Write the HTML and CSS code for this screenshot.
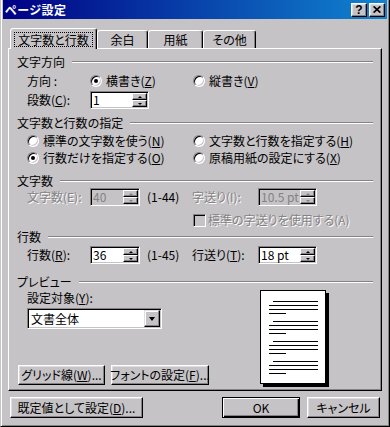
FILE: index.html
```html
<!DOCTYPE html>
<html lang="ja">
<head>
    <meta charset="UTF-8">
    <meta name="viewport" content="width=device-width, initial-scale=1.0">
    <title>ページ設定</title>
    <link rel="stylesheet" href="styles.css">
</head>
<body>
    <div class="window">
        <div class="titlebar">
            <span class="title">ページ設定</span>
            <span class="cap-btn">?</span>
            <span class="cap-btn">
                <svg width="8" height="7" viewBox="0 0 8 7"><path d="M0.6 0.4L7.4 6.6M7.4 0.4L0.6 6.6" stroke="#000" stroke-width="1.7"/></svg>
            </span>
        </div>

        <div class="client">
            <div class="tabs">
                <div class="tab tab-1 active"><span class="focus">文字数と行数</span></div>
                <div class="tab tab-2">余白</div>
                <div class="tab tab-3">用紙</div>
                <div class="tab tab-4">その他</div>
            </div>

            <div class="panel">
                <!-- 文字方向 -->
                <div class="group-head"><span>文字方向</span><i class="etch"></i></div>
                <div class="row r-dir">
                    <span class="lbl">方向 :</span>
                    <label class="opt opt-dir"><span class="radio on"></span>横書き(<u>Z</u>)</label>
                    <label class="opt"><span class="radio"></span>縦書き(<u>V</u>)</label>
                </div>
                <div class="row tall r-cols">
                    <span class="lbl">段数(<u>C</u>):</span>
                    <div class="spin spin-wide">
                        <span class="spin-val">1</span>
                        <span class="spin-btns"><span class="up"></span><span class="dn"></span></span>
                    </div>
                </div>

                <!-- 文字数と行数の指定 -->
                <div class="group-head h-spec"><span>文字数と行数の指定</span><i class="etch"></i></div>
                <div class="row r-spec1">
                    <label class="opt opt-spec"><span class="radio"></span>標準の文字数を使う(<u>N</u>)</label>
                    <label class="opt"><span class="radio"></span>文字数と行数を指定する(<u>H</u>)</label>
                </div>
                <div class="row r-spec2">
                    <label class="opt opt-spec"><span class="radio on"></span>行数だけを指定する(<u>O</u>)</label>
                    <label class="opt"><span class="radio"></span>原稿用紙の設定にする(<u>X</u>)</label>
                </div>

                <!-- 文字数 -->
                <div class="group-head h-chars"><span>文字数</span><i class="etch"></i></div>
                <div class="row tall">
                    <span class="lbl dis">文字数(E):</span>
                    <div class="spin spin-narrow disabled">
                        <span class="spin-val">40</span>
                        <span class="spin-btns"><span class="up"></span><span class="dn"></span></span>
                    </div>
                    <span class="range">(1-44)</span>
                    <span class="lbl2 dis">字送り(I):</span>
                    <div class="spin spin-wide disabled">
                        <span class="spin-val">10.5 pt</span>
                        <span class="spin-btns"><span class="up"></span><span class="dn"></span></span>
                    </div>
                </div>
                <div class="row r-check">
                    <label class="opt dis"><span class="check"></span>標準の字送りを使用する(A)</label>
                </div>

                <!-- 行数 -->
                <div class="group-head h-lines"><span>行数</span><i class="etch"></i></div>
                <div class="row tall r-lines">
                    <span class="lbl">行数(<u>R</u>):</span>
                    <div class="spin spin-narrow">
                        <span class="spin-val">36</span>
                        <span class="spin-btns"><span class="up"></span><span class="dn"></span></span>
                    </div>
                    <span class="range">(1-45)</span>
                    <span class="lbl2">行送り(<u>T</u>):</span>
                    <div class="spin spin-wide">
                        <span class="spin-val">18 pt</span>
                        <span class="spin-btns"><span class="up"></span><span class="dn"></span></span>
                    </div>
                </div>

                <!-- プレビュー -->
                <div class="group-head h-prev"><span>プレビュー</span><i class="etch"></i></div>
                <div class="preview">
                    <div class="preview-side">
                        <span class="target-lbl">設定対象(<u>Y</u>):</span>
                        <div class="select">
                            <span class="select-val">文書全体</span>
                            <span class="select-btn"></span>
                        </div>
                        <div class="preview-btns">
                            <span class="btn btn-grid">グリッド線(<u>W</u>)...</span>
                            <span class="btn btn-font">フォントの設定(<u>F</u>)...</span>
                        </div>
                    </div>
                    <svg class="page" width="69" height="97" viewBox="0 0 69 97">
                        <rect x="3" y="3" width="66" height="94" fill="#000"/>
                        <rect x="0.5" y="0.5" width="65" height="93" fill="#fff" stroke="#000"/>
                        <path stroke="#000" d="M13 11.5H58M9 15.5H58M9 19.5H58M9 23.5H26
                                               M13 31.5H58M9 35.5H58M9 39.5H58M9 43.5H26
                                               M13 51.5H58M9 55.5H58M9 59.5H58M9 63.5H26
                                               M13 71.5H58M9 75.5H58M9 79.5H58M9 83.5H26"/>
                    </svg>
                </div>
            </div>

            <div class="footer">
                <span class="btn btn-default-set">既定値として設定(<u>D</u>)...</span>
                <span class="btn btn-ok default">OK</span>
                <span class="btn btn-cancel">キャンセル</span>
            </div>
        </div>
    </div>
</body>
</html>
```

FILE: styles.css
```css
:root {
    --face: #c6c3c6;
    --shadow: #848284;
    --light: #dedede;
    --dark: #000;
}

* {
    box-sizing: border-box;
}

body {
    margin: 0;
    background: var(--face);
    font-family: "Noto Sans CJK JP", sans-serif;
    font-size: 12px;
    line-height: 16px;
    font-feature-settings: "palt";
    color: #000;
}

u {
    text-decoration: underline;
    text-underline-offset: 1px;
}

label {
    cursor: default;
}

.window {
    width: 390px;
    height: 427px;
    display: flex;
    flex-direction: column;
    background: var(--face);
    border: 1px solid;
    border-color: var(--face) var(--dark) var(--dark) var(--face);
    border-top: 0;
    padding: 0 2px 2px;
    box-shadow: inset 1px 0 #fff, inset -1px -1px var(--shadow);
}

/* title bar */
.titlebar {
    height: 19px;
    flex: none;
    display: flex;
    align-items: center;
    padding: 0 2px;
    background: linear-gradient(to right, #000084, #1084d0);
    color: #fff;
}

.title {
    flex: 1;
    font-weight: bold;
    letter-spacing: 0.5px;
}

.cap-btn {
    width: 16px;
    height: 14px;
    display: flex;
    align-items: center;
    justify-content: center;
    background: var(--face);
    border: 1px solid;
    border-color: #fff var(--dark) var(--dark) #fff;
    box-shadow: inset -1px -1px var(--shadow), inset 1px 1px var(--light);
    color: #000;
    font: bold 12px/12px "Liberation Sans", sans-serif;
}

.cap-btn + .cap-btn {
    margin-left: 2px;
}

/* client area */
.client {
    flex: 1;
    padding: 9px 5px 0;
}

.tabs {
    height: 20px;
    display: flex;
    align-items: flex-end;
    padding-left: 2px;
}

.tab {
    height: 18px;
    display: flex;
    align-items: center;
    justify-content: center;
    border: 1px solid;
    border-bottom: 0;
    border-color: #fff var(--dark) transparent #fff;
    border-radius: 3px 3px 0 0;
    box-shadow: inset -1px 0 var(--shadow);
}

.tab.active {
    height: 21px;
    margin-bottom: -1px;
    position: relative;
    z-index: 1;
    background: var(--face);
}

.tab-1 { width: 87px; }
.tab-2 { width: 51px; }
.tab-3 { width: 55px; }
.tab-4 { width: 53px; }

.focus {
    width: 79px;
    border: 1px dotted #000;
    text-align: center;
    line-height: 13px;
}

.panel {
    height: 343px;
    border: 1px solid;
    border-color: #fff var(--dark) var(--dark) #fff;
    box-shadow: inset -1px -1px var(--shadow);
    padding-top: 6px;
}

.group-head {
    height: 14px;
    display: flex;
    align-items: center;
    padding: 0 8px;
    line-height: 14px;
}

.etch {
    flex: 1;
    height: 2px;
    margin-left: 7px;
    border-top: 1px solid var(--shadow);
    border-bottom: 1px solid #fff;
}

.row {
    height: 16px;
    display: flex;
    align-items: center;
    padding-left: 18px;
    white-space: nowrap;
}

.row.tall {
    height: 18px;
}

.r-dir { margin-top: 4px; }
.r-cols { margin-top: 2px; }
.h-spec { margin-top: 7px; }
.r-spec1 { margin-top: 3px; }
.r-spec2 { margin-top: 1px; }
.h-chars { margin-top: 8px; }
.r-check { margin-top: 6px; padding-left: 184px; }
.h-lines { margin-top: 2px; }
.r-lines { margin-top: 2px; }
.h-prev { margin-top: 11px; }

.lbl {
    width: 63px;
    flex: none;
}

.lbl2 {
    width: 66px;
    flex: none;
}

.range {
    width: 45px;
    margin-left: 7px;
    flex: none;
}

.dis {
    color: var(--shadow);
    text-shadow: 1px 1px #fff;
}

.opt {
    display: flex;
    align-items: center;
    white-space: nowrap;
}

.opt-dir { width: 103px; }
.opt-spec { width: 166px; }

.radio {
    width: 12px;
    height: 12px;
    flex: none;
    margin-right: 4px;
    display: flex;
    align-items: center;
    justify-content: center;
    border-radius: 50%;
    background: #fff;
    border: 1px solid;
    border-color: var(--shadow) #fff #fff var(--shadow);
    box-shadow: inset 1px 1px #000, inset -1px -1px var(--face);
}

.radio.on::after {
    content: "";
    width: 4px;
    height: 4px;
    border-radius: 50%;
    background: #000;
}

.check {
    width: 13px;
    height: 13px;
    flex: none;
    margin-right: 2px;
    background: var(--face);
    border: 1px solid;
    border-color: var(--shadow) #fff #fff var(--shadow);
    box-shadow: inset 1px 1px #000, inset -1px -1px var(--face);
}

/* sunken fields */
.spin,
.select {
    display: flex;
    padding: 1px;
    background: #fff;
    border: 1px solid;
    border-color: var(--shadow) #fff #fff var(--shadow);
    box-shadow: inset 1px 1px #000, inset -1px -1px var(--face);
}

.spin {
    height: 18px;
    flex: none;
}

.spin-wide { width: 59px; }
.spin-narrow { width: 50px; }

.spin.disabled {
    background: var(--face);
    color: var(--shadow);
}

.spin-val {
    flex: 1;
    padding-left: 1px;
    line-height: 14px;
}

.spin-btns {
    width: 15px;
    display: flex;
    flex-direction: column;
}

.spin-btns span {
    height: 7px;
    display: flex;
    align-items: center;
    justify-content: center;
    background: var(--face);
    border: 1px solid;
    border-color: #fff var(--dark) var(--dark) #fff;
    box-shadow: inset -1px -1px var(--shadow);
}

.spin-btns .up::after {
    content: "";
    border-left: 2px solid transparent;
    border-right: 2px solid transparent;
    border-bottom: 2px solid #000;
}

.spin-btns .dn::after {
    content: "";
    border-left: 2px solid transparent;
    border-right: 2px solid transparent;
    border-top: 2px solid #000;
}

.spin.disabled .spin-btns .up::after {
    border-bottom-color: var(--shadow);
}

.spin.disabled .spin-btns .dn::after {
    border-top-color: var(--shadow);
}

/* preview */
.preview {
    display: flex;
    margin-top: 1px;
    padding-left: 9px;
}

.preview-side {
    width: 242px;
    display: flex;
    flex-direction: column;
}

.target-lbl {
    height: 16px;
    padding-left: 9px;
}

.select {
    width: 135px;
    height: 21px;
    margin: 2px 0 0 9px;
}

.select-val {
    flex: 1;
    padding-left: 2px;
    line-height: 17px;
}

.select-btn {
    width: 16px;
    display: flex;
    align-items: center;
    justify-content: center;
    background: var(--face);
    border: 1px solid;
    border-color: var(--light) var(--dark) var(--dark) var(--light);
    box-shadow: inset -1px -1px var(--shadow), inset 1px 1px #fff;
}

.select-btn::after {
    content: "";
    margin-top: 1px;
    border-left: 3.5px solid transparent;
    border-right: 3.5px solid transparent;
    border-top: 4px solid #000;
}

.preview-btns {
    display: flex;
    gap: 6px;
    margin-top: 36px;
}

.page {
    display: block;
    flex: none;
}

/* buttons */
.btn {
    height: 20px;
    display: flex;
    align-items: center;
    justify-content: center;
    white-space: nowrap;
    background: var(--face);
    border: 1px solid;
    border-color: #fff var(--dark) var(--dark) #fff;
    box-shadow: inset -1px -1px var(--shadow), inset 1px 1px var(--light);
}

.btn.default {
    border-color: var(--dark);
    box-shadow: inset 1px 1px #fff, inset -1px -1px var(--dark), inset -2px -2px var(--shadow);
}

.btn-grid { width: 87px; }
.btn-font { width: 98px; }

.footer {
    height: 21px;
    display: flex;
    margin-top: 6px;
    padding: 0 2px;
}

.footer .btn {
    height: 21px;
}

.btn-default-set { width: 133px; }
.btn-ok { width: 78px; margin-left: auto; }
.btn-cancel { width: 73px; margin-left: 7px; }
```
